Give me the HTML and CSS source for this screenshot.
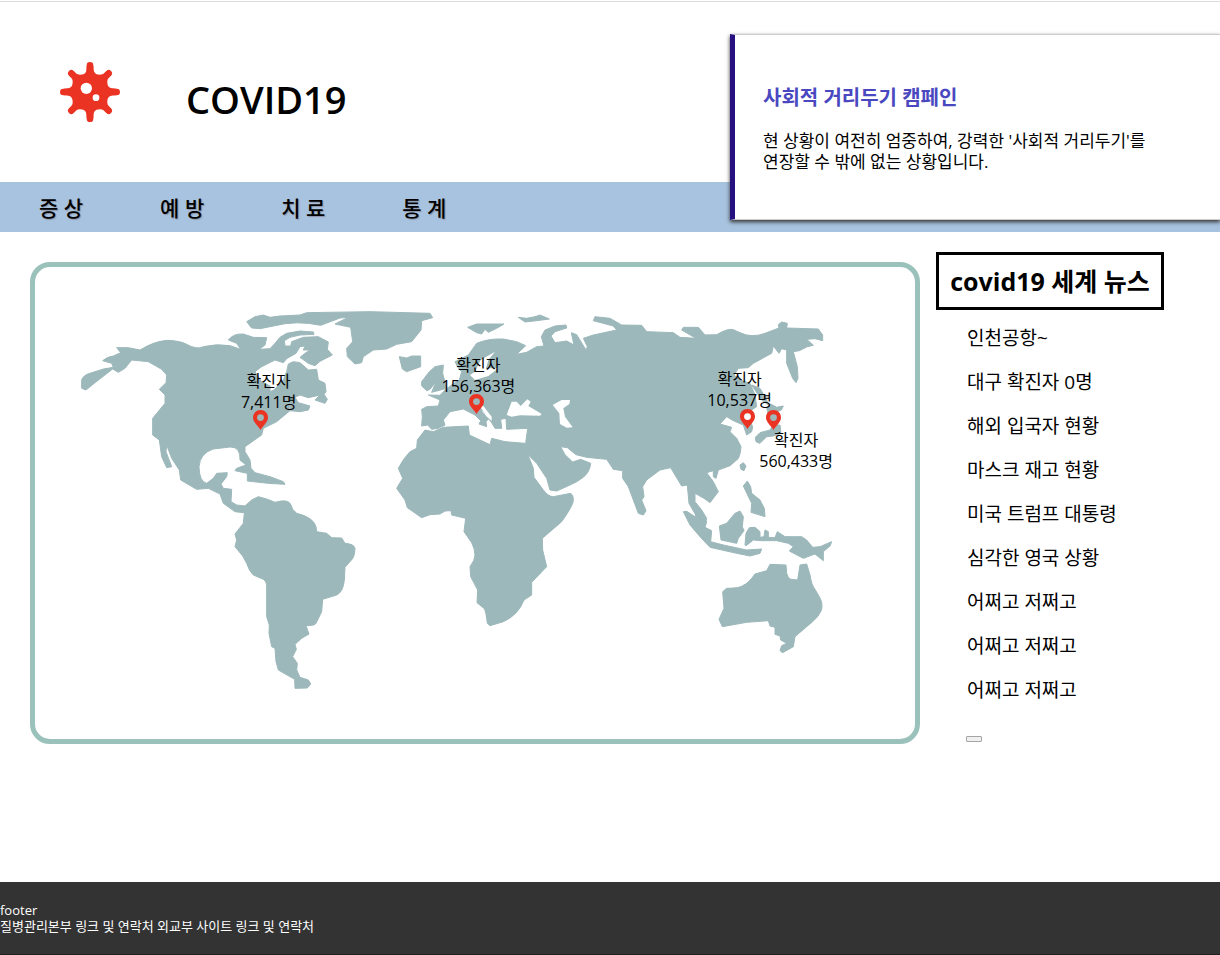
FILE: index.html
```html
<!DOCTYPE html>
<html lang="ko">
<head>
<meta charset="utf-8">
<title>COVID19</title>
<link rel="stylesheet" href="styles.css">
</head>
<body>
<header class="header">
  <svg class="logo" viewBox="0 0 180 180" aria-hidden="true">
    <g stroke="#eb3323" stroke-width="20" stroke-linecap="round">
      <path d="M90 10V170M10 90H170M34 34L146 146M146 34L34 146"/>
    </g>
    <path fill="#eb3323" d="M80 12C80 30 78 38 60 38C50 38 46 34 40 28L28 40C36 46 38 52 38 60C38 76 30 80 12 80V100C30 100 38 104 38 120C38 128 36 134 28 140L40 152C46 146 50 142 60 142C76 142 80 150 80 168H100C100 150 104 142 120 142C130 142 134 146 140 152L152 140C144 134 142 128 142 120C142 104 150 100 168 100V80C150 80 142 76 142 60C142 52 144 46 152 40L140 28C134 34 130 38 120 38C104 38 100 30 100 12Z"/>
    <circle cx="79" cy="79" r="17" fill="#fff"/>
    <circle cx="108" cy="107" r="10" fill="#fff"/>
  </svg>
  <h1 class="title">COVID19</h1>
</header>

<nav class="nav">
  <a class="nav-link" href="#symptom">증 상</a>
  <a class="nav-link" href="#prevent">예 방</a>
  <a class="nav-link" href="#treat">치 료</a>
  <a class="nav-link" href="#stats">통 계</a>
</nav>

<section class="campaign">
  <h2 class="campaign-title">사회적 거리두기 캠페인</h2>
  <p class="campaign-text">현 상황이 여전히 엄중하여, 강력한 '사회적 거리두기'를<br>연장할 수 밖에 없는 상황입니다.</p>
</section>

<main class="main">
  <section class="map">
    <svg class="world" viewBox="0 0 2640 1416" role="img" aria-label="세계 지도">
      <g fill="#9cb8bb" stroke="#9cb8bb" stroke-width="3" stroke-linejoin="round">
        <!-- North and Central America -->
        <g transform="translate(105 99)">
          <path d="M35 240Q40 225 60 220L100 207L130 202L125 190L98 182Q112 170 130 168L152 158L140 143L175 143L210 150Q250 125 290 121Q330 122 350 133Q380 150 400 140Q440 130 480 137L512 148L500 130L475 120Q490 100 520 102L550 112L590 113L585 135L568 148L600 146L615 130L630 112L650 100L690 93L730 96L732 103L690 105L660 112L643 122L645 138L662 138L665 125L700 112L745 110L775 126L772 148L787 165L750 184L735 197L715 190L690 172L705 160L720 150L700 150L705 138L690 140L678 160L650 176L640 188L615 180L575 200L555 215L575 245L600 258L600 275L612 270L640 240L650 215L655 192L670 185L690 188L715 210L740 208L745 240L765 250L768 275L762 283L772 298L765 310L735 300L750 285L715 293L690 285L675 292L685 308L720 318L715 330L690 335L660 332L620 365L580 385L575 405L525 440L525 455L540 480L543 505L555 518L600 530L640 545L645 553L595 550L532 543L532 520L495 512L500 505L528 495L510 480Q512 440 480 441L430 447Q390 460 387 500Q388 545 410 550L430 535L440 520L472 518L470 530L453 552L460 565L485 568L483 605L500 615L525 618L540 630L520 638L495 635L460 610L450 582L415 565L380 568L332 540L328 510L305 475L290 435L288 455L305 500L290 503L275 470L268 420L248 405L248 355L285 310L285 285L268 268L288 248L290 225L275 208L235 185L185 180L165 205L145 217L128 207L75 248L48 270L35 265Z"/>
        </g>
        <!-- Arctic islands, Greenland, Iceland -->
        <g transform="translate(585 99)">
          <path d="M50 65L75 50L100 45L120 52L150 48L210 45L230 38L420 35L600 40L608 53L575 62L573 90L545 125L500 133L470 147L430 150L400 170L395 188L375 192L352 170L350 145L368 125L362 82L315 72L355 52L330 54L272 76Q200 60 130 78L90 86L65 84Z"/>
          <path d="M508 170L530 174L545 168L572 168L572 200L530 215L517 207Z"/>
        </g>
        <!-- South America -->
        <g transform="translate(555 639)">
          <path d="M75 78L95 60L115 50L140 57L165 67Q205 55 213 75L218 88L230 100Q280 112 288 140L290 155L320 160L335 173L365 174L375 190Q402 192 405 205Q404 230 396 238L375 262L373 300Q370 335 350 345L308 358L305 395L288 430Q285 437 258 437L267 462L245 475L225 493L229 508L218 530L232 550L230 570L240 592L265 600L272 612L262 624L225 625L224 598L175 570L168 545L165 505L155 500L147 460L148 435L140 410L140 315Q138 303 130 298L100 285Q88 275 80 250L68 228L45 200L50 180L45 162L70 130Z"/>
        </g>
        <!-- Africa -->
        <g transform="translate(1035 519)">
          <path d="M135 -30L160 -25L190 -38L265 -42L268 -15L330 14L335 -5L375 5L435 10L442 40L460 85L462 112L490 150Q505 170 520 170L572 160Q584 170 578 190Q570 210 545 245L487 295L488 330L500 380L455 427L455 465L432 480Q415 525 370 545L330 557L322 550Q318 515 313 506L291 488L293 450L272 410L270 380Q285 360 285 345Q284 325 275 308L252 275L257 235L215 225L213 212L195 213L180 222L150 224L125 233L82 203L75 180L50 145L68 115L55 85Q70 55 90 35L110 25L112 0Z"/>
        </g>
        <!-- Europe and Asia -->
        <g transform="translate(1035 99)">
          <path d="M125 328L140 320L175 318L180 300L145 285L180 286L195 270L215 255L238 240L245 215L235 205L225 185L265 165L290 130Q325 115 370 117L410 125L437 137L410 163L440 157L470 140L492 138L484 110L495 90L525 78L558 75L560 84L525 95L513 108L525 128L560 123L582 135L574 98L590 104L618 150L622 140L610 115L640 105L710 90L700 78L640 62L645 50L690 55L725 75L785 76L800 95L880 98L900 112L948 115L905 90L910 82L955 82L975 105L1010 104Q1045 84 1060 89L1080 98Q1115 115 1155 100L1197 84L1195 74L1205 66L1222 70L1220 84L1315 87L1328 105L1328 122L1305 116L1280 118L1300 136L1282 140L1258 152L1240 155L1252 200L1254 235L1248 248L1238 235L1220 190L1220 150L1205 146L1197 160L1180 138L1175 160L1120 190L1105 203L1075 205L1062 225L1080 240L1110 250L1125 285L1130 320L1100 340L1118 380L1115 395L1100 405L1090 375L1060 362L1040 350L1020 372L1055 382L1050 395L1070 415L1083 440Q1080 475 1070 480L1050 497L1015 510L1008 535L1000 530L1000 512L980 518L1000 545L1015 575L990 608L972 595L945 580L945 605L965 630L980 655L975 678L950 650L927 610L922 555L905 558L882 520L872 503L840 510L800 540L788 560L792 590L785 600L798 632L790 645L775 640L760 600L745 560L728 535L728 512L700 508L680 478L620 472L588 464L562 443L542 440L555 464L578 486L602 478L632 490Q630 515 610 532Q590 547 570 555L530 573L510 570L500 535L470 490L440 460L437 430L443 385L380 388L378 355L362 358L365 385L345 385L335 368L300 322L308 340L330 352L318 365L320 380L297 372L302 362L285 345L250 327L210 335L190 360L195 375L175 385L155 388L143 375L125 378L127 350Z"/>
          <path d="M148 215L165 200L190 195L188 220L200 265L155 277L168 245L150 268L140 272L125 258L125 245Z"/>
          <path d="M263 82L290 72L372 72L350 85L325 97L315 88L305 102L290 98Z"/>
          <path d="M415 52L440 55L465 50L480 45L508 57L470 62L435 66Z"/>
          <path d="M1115 255L1140 265L1160 300L1165 315L1145 300Z"/>
          <path d="M1160 322L1172 312L1190 322L1210 318L1204 330L1180 340L1172 350L1165 345Z"/>
          <path d="M1126 412L1140 398L1170 390L1180 375L1200 375L1203 400L1180 408L1160 410L1140 430L1128 425Z"/>
        </g>
        <!-- South-east Asia and Oceania -->
        <g transform="translate(1875 549)">
          <path d="M240 45L250 38L258 48L252 62L243 58Z"/>
          <path d="M250 108L262 93L272 110L275 130L300 150L313 175L315 200L273 187L275 160Z"/>
          <path d="M70 185L80 184L105 200L110 190L120 200L140 215L135 232L155 242L152 275L190 285L260 300L305 297L300 310L270 318L230 310L150 292L120 260L90 225Z"/>
          <path d="M178 228L200 220L225 190L240 183L250 200L247 230L252 242L235 265L230 280L183 270Z"/>
          <path d="M255 285L258 250L268 233L285 232L300 245L300 262L312 260L315 240L325 245L325 262L345 263L352 245L375 260L400 260L425 260L440 270L458 292L480 290L515 275L510 288L490 305L490 332L465 312L430 325L388 303L400 290L385 280L350 272L305 272L280 270L258 287Z"/>
          <path d="M188 425L200 415Q240 415 250 406Q265 400 285 372L320 362L330 343L378 345L380 370Q385 388 393 388L413 390L420 345L440 342L450 375Q455 405 462 413L478 440Q492 465 482 485Q475 500 460 513L405 560L400 590L368 608L360 602L365 587L380 580L362 570L360 558L345 553L345 532L330 528L325 512L260 517L187 530L177 508L192 475Z"/>
        </g>
      </g>
      <!-- Inland seas -->
      <g fill="#fff" transform="translate(1035 99)">
        <path d="M380 345L395 305L410 305L422 318L442 298L452 305L445 318L485 342L480 347L420 346L395 350Z"/>
        <path d="M518 315L545 300L570 300L568 312L550 325L555 350L578 382L560 383L540 372L538 340Z"/>
        <path d="M302 180L345 155L325 180L318 205L355 205L325 228L285 240L270 225L285 215Z"/>
        <path d="M300 318L310 318L335 350L335 362L318 348Z"/>
      </g>
    </svg>

    <div class="pin pin-us">
      <p class="pin-text">확진자<br>7,411명</p>
      <svg class="marker" viewBox="0 0 44 58"><path fill="#eb3323" fill-rule="evenodd" d="M22 0C9 0 0 10 0 22C0 36 14 45 22 58C30 45 44 36 44 22C44 10 35 0 22 0ZM22 12A10 10 0 1 1 22 32A10 10 0 1 1 22 12Z"/></svg>
    </div>
    <div class="pin pin-it">
      <p class="pin-text">확진자<br>156,363명</p>
      <svg class="marker" viewBox="0 0 44 58"><path fill="#eb3323" fill-rule="evenodd" d="M22 0C9 0 0 10 0 22C0 36 14 45 22 58C30 45 44 36 44 22C44 10 35 0 22 0ZM22 12A10 10 0 1 1 22 32A10 10 0 1 1 22 12Z"/></svg>
    </div>
    <div class="pin pin-kr">
      <p class="pin-text">확진자<br>10,537명</p>
      <svg class="marker" viewBox="0 0 44 58"><circle cx="22" cy="22" r="14" fill="#fff"/><path fill="#eb3323" fill-rule="evenodd" d="M22 0C9 0 0 10 0 22C0 36 14 45 22 58C30 45 44 36 44 22C44 10 35 0 22 0ZM22 12A10 10 0 1 1 22 32A10 10 0 1 1 22 12Z"/></svg>
    </div>
    <div class="pin pin-jp">
      <svg class="marker" viewBox="0 0 44 58"><circle cx="22" cy="22" r="14" fill="#9cb8bb"/><path fill="#eb3323" fill-rule="evenodd" d="M22 0C9 0 0 10 0 22C0 36 14 45 22 58C30 45 44 36 44 22C44 10 35 0 22 0ZM22 12A10 10 0 1 1 22 32A10 10 0 1 1 22 12Z"/></svg>
      <p class="pin-text">확진자<br>560,433명</p>
    </div>
  </section>

  <aside class="news">
    <h2 class="news-title">covid19 세계 뉴스</h2>
    <ul class="news-list">
      <li>인천공항~</li>
      <li>대구 확진자 0명</li>
      <li>해외 입국자 현황</li>
      <li>마스크 재고 현황</li>
      <li>미국 트럼프 대통령</li>
      <li>심각한 영국 상황</li>
      <li>어쩌고 저쩌고</li>
      <li>어쩌고 저쩌고</li>
      <li>어쩌고 저쩌고</li>
    </ul>
    <button class="news-button" type="button" aria-label="뉴스 더보기"></button>
  </aside>
</main>

<footer class="footer">
  <p>footer</p>
  <p>질병관리본부 링크 및 연락처 외교부 사이트 링크 및 연락처</p>
</footer>
</body>
</html>
```

FILE: styles.css
```css
* {
  box-sizing: border-box;
}

body {
  position: relative;
  display: flex;
  flex-direction: column;
  min-height: 100vh;
  margin: 0;
  background: #fff;
  color: #000;
  font-family: "Open Sans", "Noto Sans CJK KR", sans-serif;
  font-size: 16px;
  line-height: 21px;
}

h1,
h2,
p,
ul {
  margin: 0;
  padding: 0;
}

.header {
  display: flex;
  align-items: flex-start;
  gap: 66px;
  margin-top: 1px;
  padding: 60px;
  border-top: 1px solid #dadcdb;
}

.logo {
  width: 60px;
  height: 60px;
}

.title {
  height: 60px;
  padding-top: 11px;
  font-size: 38px;
  font-weight: 600;
  line-height: 53px;
}

.nav {
  display: flex;
  align-items: center;
  gap: 77px;
  height: 50px;
  padding: 2px 39px 0;
  background: #a8c3df;
}

.nav-link {
  color: #000;
  font-size: 21px;
  font-weight: 500;
  line-height: 26px;
  text-decoration: none;
  text-shadow: 1px 1px 1px #8c93a8;
}

.campaign {
  position: absolute;
  top: 34px;
  right: 0;
  width: 490px;
  padding: 50px 28px 47px;
  border-top: 1px solid #ccc;
  border-bottom: 1px solid #ccc;
  border-left: 5px solid #27107f;
  background: #fff;
  box-shadow: 0 2px 4px #333;
}

.campaign-title {
  margin-bottom: 19px;
  color: #4a48c0;
  font-size: 20px;
  line-height: 26px;
}

.campaign-text {
  font-size: 17px;
  white-space: nowrap;
}

.main {
  display: flex;
  flex: 1;
  align-items: flex-start;
  gap: 16px;
  padding: 20px 56px 20px 30px;
}

.map {
  position: relative;
  flex: 1;
  margin-top: 10px;
  border: 5px solid #9ac2bb;
  border-radius: 20px;
}

.world {
  display: block;
  width: 100%;
}

.pin {
  position: absolute;
  display: flex;
  flex-direction: column;
  align-items: center;
}

.pin-text {
  text-align: center;
  white-space: nowrap;
}

.marker {
  width: 15px;
  height: 20px;
  margin-top: -3px;
}

.pin-us {
  top: 22%;
  left: 23.4%;
}

.pin-us .marker {
  margin-right: 16px;
}

.pin-it {
  top: 18.6%;
  left: 46.2%;
}

.pin-it .marker {
  margin-right: 4px;
}

.pin-kr {
  top: 21.6%;
  left: 76.4%;
}

.pin-kr .marker {
  margin-top: -2px;
  margin-left: 16px;
}

.pin-jp {
  top: 31%;
  left: 82.3%;
}

.pin-jp .marker {
  margin-right: 46px;
}

.news {
  width: 228px;
}

.news-title {
  border: 3px solid #000;
  font-size: 25px;
  line-height: 52px;
  text-align: center;
  white-space: nowrap;
}

.news-list {
  display: grid;
  gap: 20px;
  padding: 16px 0 34px 31px;
  font-size: 19px;
  line-height: 24px;
  list-style: none;
}

.news-button {
  display: block;
  width: 16px;
  height: 6px;
  margin-left: 30px;
  padding: 0;
  border: 1px solid #a5a5a5;
  border-radius: 1px;
  background: #f0f0f0;
}

.footer {
  padding: 20px 0;
  border-bottom: 1px solid #202124;
  background: #333;
  color: #fff;
  font-size: 13px;
  line-height: 16px;
}
```
